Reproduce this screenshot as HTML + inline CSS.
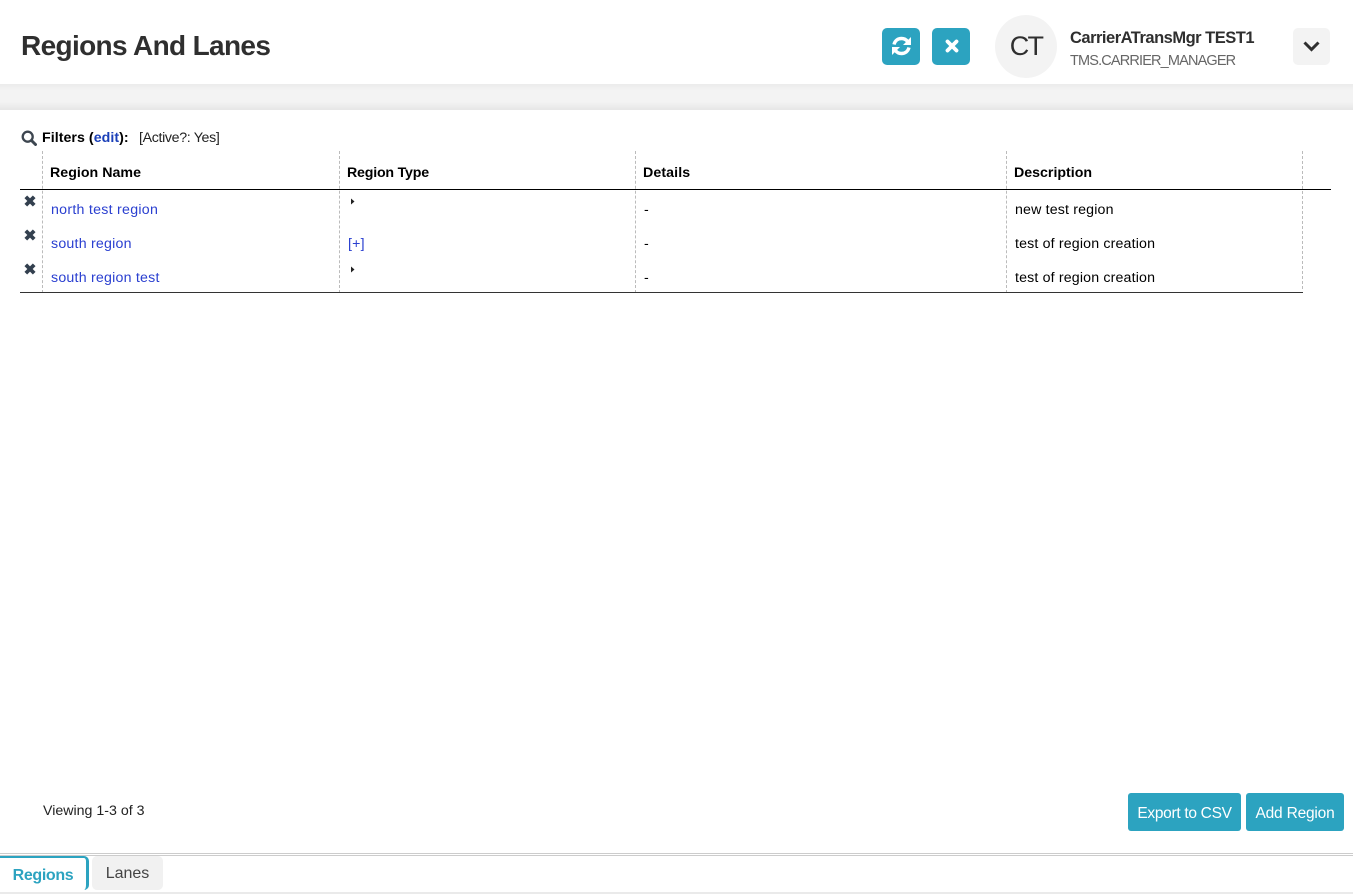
<!DOCTYPE html>
<html>
<head>
<meta charset="utf-8">
<title>Regions And Lanes</title>
<style>
html,body{margin:0;padding:0;background:#fff}
body{width:1353px;height:894px;position:relative;overflow:hidden;font-family:"Liberation Sans",sans-serif;color:#000}
.a{position:absolute;white-space:nowrap}
.t{font-size:14.2px;line-height:18px;letter-spacing:.16px}
.lnk{color:#2a3fd0;letter-spacing:.22px}
.h{font-weight:700;font-size:14.2px;line-height:18px;letter-spacing:.05px}
.v{position:absolute;top:151px;height:142px;border-left:1px dashed #bbb;width:0}
.b{position:absolute;background:#2ca3c0;border-radius:5px}
.x{position:absolute;left:24px}
</style>
</head>
<body>
<div class="a" style="left:0;top:84px;width:1353px;height:26px;background:linear-gradient(#ebebeb 0,#f3f3f3 6px,#f3f3f3 18px,#e6e6e6 26px)"></div>
<div class="a" style="left:0;top:0;width:1353px;height:84px;background:#fff"></div>
<div class="a" style="left:21px;top:28px;font-size:28px;line-height:36px;font-weight:700;color:#2f2f2f;letter-spacing:-.65px">Regions And Lanes</div>

<div class="b" style="left:882px;top:28px;width:38px;height:37px"></div>
<svg class="a" style="left:891px;top:35px" width="21" height="22" viewBox="0 0 21 22"><g fill="none" stroke="#fff" stroke-width="3.400"><path d="M3 9.500C4 5.500 7 3.500 10.500 3.500c2.600 0 4.600 1 6 3"/><path d="M18 12.500c-1 4-4 6-7.500 6-2.600 0-4.600-1-6-3"/></g><path d="M20 2v8h-8zM1 20v-8h8z" fill="#fff"/></svg>
<div class="b" style="left:932px;top:28px;width:38px;height:37px"></div>
<svg class="a" style="left:945px;top:39px" width="14" height="14" viewBox="0 0 14 14"><path d="M2.500 2.500l9 9M11.500 2.500l-9 9" stroke="#fff" stroke-width="3.800" stroke-linecap="round"/></svg>

<div class="a" style="left:995px;top:15px;width:62px;height:63px;border-radius:50%;background:#f3f3f3;text-align:center;font-size:27px;line-height:63px;color:#2f2f2f;letter-spacing:-1.800px">CT</div>
<div class="a" style="left:1070px;top:28px;font-size:16.500px;line-height:20px;font-weight:700;color:#2f2f2f;letter-spacing:-.5px">CarrierATransMgr TEST1</div>
<div class="a" style="left:1070px;top:52px;font-size:14.500px;line-height:19px;color:#666;letter-spacing:-.84px">TMS.CARRIER_MANAGER</div>
<div class="a" style="left:1293px;top:28px;width:37px;height:37px;border-radius:5px;background:#f3f3f3"></div>
<svg class="a" style="left:1302px;top:40px" width="19" height="13" viewBox="0 0 19 13"><path d="M2.500 2.500l7 7 7-7" fill="none" stroke="#2f2f2f" stroke-width="3"/></svg>

<svg class="a" style="left:21px;top:130px" width="16" height="16" viewBox="0 0 16 16"><circle cx="6.700" cy="6.700" r="5" fill="none" stroke="#3d4650" stroke-width="2.300"/><path d="M10.500 10.500l4 4" stroke="#3d4650" stroke-width="3" stroke-linecap="round"/></svg>
<div class="a h" style="left:42px;top:129px">Filters (<span style="color:#1a3fb8">edit</span>):</div>
<div class="a t" style="left:139px;top:129px;color:#222;letter-spacing:-.34px">[Active?: Yes]</div>

<div class="v" style="left:42px"></div>
<div class="v" style="left:339px"></div>
<div class="v" style="left:635px"></div>
<div class="v" style="left:1006px"></div>
<div class="v" style="left:1302px;height:138px"></div>

<div class="a h" style="left:50px;top:164px;letter-spacing:.03px">Region Name</div>
<div class="a h" style="left:347px;top:164px;letter-spacing:-.2px">Region Type</div>
<div class="a h" style="left:643px;top:164px;letter-spacing:.1px">Details</div>
<div class="a h" style="left:1014px;top:164px;letter-spacing:0">Description</div>
<div class="a" style="left:20px;top:189px;width:1311px;height:1px;background:#000"></div>

<svg class="x a" style="top:195px" width="12" height="12" viewBox="0 0 12 12"><path d="M1.800 1.800l8.400 8.400M10.200 1.800l-8.400 8.400" stroke="#33404f" stroke-width="3.800"/></svg>
<svg class="x a" style="top:229px" width="12" height="12" viewBox="0 0 12 12"><path d="M1.800 1.800l8.400 8.400M10.200 1.800l-8.400 8.400" stroke="#33404f" stroke-width="3.800"/></svg>
<svg class="x a" style="top:263px" width="12" height="12" viewBox="0 0 12 12"><path d="M1.800 1.800l8.400 8.400M10.200 1.800l-8.400 8.400" stroke="#33404f" stroke-width="3.800"/></svg>

<div class="a t lnk" style="left:51px;top:201px;letter-spacing:.27px">north test region</div>
<div class="a t lnk" style="left:51px;top:235px">south region</div>
<div class="a t lnk" style="left:51px;top:269px">south region test</div>

<svg class="a" style="left:350px;top:198px" width="5" height="7" viewBox="0 0 5 7"><path d="M1 .5L4.500 3.500 1 6.500z" fill="#222"/></svg>
<div class="a t lnk" style="left:348px;top:235px">[+]</div>
<svg class="a" style="left:350px;top:266px" width="5" height="7" viewBox="0 0 5 7"><path d="M1 .5L4.500 3.500 1 6.500z" fill="#222"/></svg>

<div class="a t" style="left:644px;top:201px">-</div>
<div class="a t" style="left:644px;top:235px">-</div>
<div class="a t" style="left:644px;top:269px">-</div>

<div class="a t" style="left:1015px;top:201px">new test region</div>
<div class="a t" style="left:1015px;top:235px">test of region creation</div>
<div class="a t" style="left:1015px;top:269px">test of region creation</div>

<div class="a" style="left:20px;top:292px;width:1283px;height:1px;background:#333"></div>

<div class="a t" style="left:43px;top:802px;color:#222;letter-spacing:0">Viewing 1-3 of 3</div>

<div class="b" style="left:1128px;top:793px;width:113px;height:38px;border-radius:3px;color:#fff;text-align:center;font-size:15.500px;line-height:41px;letter-spacing:-.3px">Export to CSV</div>
<div class="b" style="left:1246px;top:793px;width:98px;height:38px;border-radius:3px;color:#fff;text-align:center;font-size:15.500px;line-height:41px;letter-spacing:-.2px">Add Region</div>

<div class="a" style="left:0;top:853px;width:1353px;height:1px;background:#ccc"></div>
<div class="a" style="left:0;top:855px;width:1353px;height:1px;background:#ccc"></div>
<div class="a" style="left:0;top:892px;width:1353px;height:2px;background:#eaeaea"></div>
<div class="a" style="left:0;top:856px;width:86px;height:32px;border-top:2px solid #2ca3c0;border-right:3px solid #2ca3c0;border-radius:0 5px 5px 0;background:#fff;color:#2ca3c0;font-weight:700;font-size:16px;line-height:35px;text-align:center;letter-spacing:-.35px">Regions</div>
<div class="a" style="left:92px;top:856px;width:71px;height:34px;border-radius:5px;background:#f1f1f1;color:#444;font-size:16px;line-height:35px;text-align:center">Lanes</div>
</body>
</html>
